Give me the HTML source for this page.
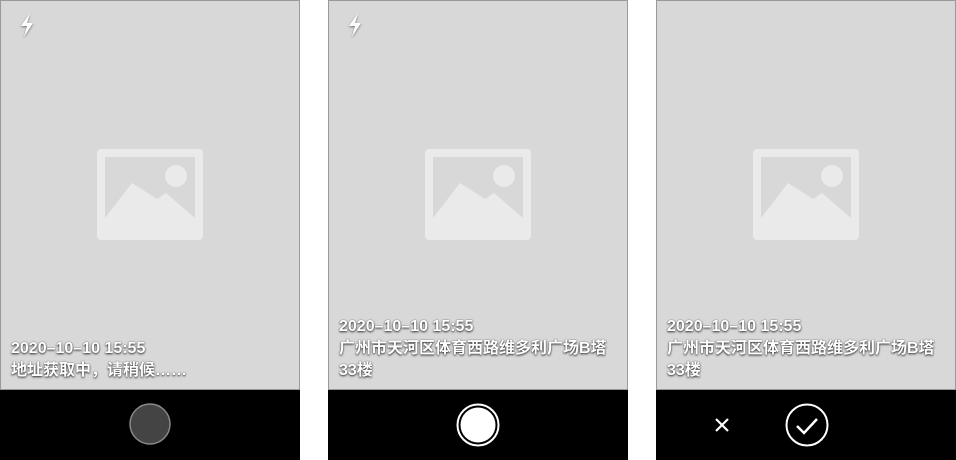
<!DOCTYPE html>
<html><head><meta charset="utf-8"><style>
*{margin:0;padding:0;box-sizing:border-box}
body{width:956px;height:460px;background:#fff;position:relative;overflow:hidden;font-family:"Liberation Sans","Noto Sans CJK SC",sans-serif}
.p{position:absolute;top:0;width:300px;height:460px;background:#000}
.v{position:absolute;left:0;top:0;width:300px;height:390px;background:#d8d8d8;border:1px solid #999}
.img{position:absolute;left:96px;top:148px}
.t{position:absolute;left:10px;color:#fff;font-size:16px;font-weight:bold;line-height:22px;white-space:nowrap;text-shadow:0 1px 2px rgba(0,0,0,.8),0 0 1px rgba(0,0,0,.6)}
.fl{position:absolute;left:17px;top:12px}
</style></head><body>
<div class="p" style="left:0">
 <div class="v">
  <svg class="fl" width="20" height="26" viewBox="0 0 20 26"><path d="M12 0 L3 13 H9 L6 24 L15 10 H9 Z" fill="#fff" filter="drop-shadow(0 1px 1px rgba(0,0,0,.5))"/></svg>
  <svg class="img" width="106" height="91" viewBox="0 0 106 91"><rect x="0" y="0" width="106" height="91" rx="4" fill="#eaeaea"/><rect x="8" y="8" width="90" height="73" fill="#d8d8d8"/><circle cx="79" cy="27" r="11" fill="#eaeaea"/><path d="M8 69 L35 34 L60 50 L69 44 L98 69 V81 H8Z" fill="#eaeaea"/></svg>
  <div class="t" style="top:337px">2020–10–10 15:55<br>地址获取中，请稍候……</div>
 </div>
 <svg style="position:absolute;left:129px;top:403px" width="44" height="44"><circle cx="21" cy="21" r="20" fill="#444" stroke="#888" stroke-width="1.5"/></svg>
</div>
<div class="p" style="left:328px">
 <div class="v">
  <svg class="fl" width="20" height="26" viewBox="0 0 20 26"><path d="M12 0 L3 13 H9 L6 24 L15 10 H9 Z" fill="#fff" filter="drop-shadow(0 1px 1px rgba(0,0,0,.5))"/></svg>
  <svg class="img" width="106" height="91" viewBox="0 0 106 91"><rect x="0" y="0" width="106" height="91" rx="4" fill="#eaeaea"/><rect x="8" y="8" width="90" height="73" fill="#d8d8d8"/><circle cx="79" cy="27" r="11" fill="#eaeaea"/><path d="M8 69 L35 34 L60 50 L69 44 L98 69 V81 H8Z" fill="#eaeaea"/></svg>
  <div class="t" style="top:315px">2020–10–10 15:55<br>广州市天河区体育西路维多利广场B塔<br>33楼</div>
 </div>
 <svg style="position:absolute;left:128px;top:403px" width="44" height="44"><circle cx="22" cy="22" r="20.5" fill="none" stroke="#fff" stroke-width="2"/><circle cx="22" cy="22" r="17.5" fill="#fff"/></svg>
</div>
<div class="p" style="left:656px">
 <div class="v">
  <svg class="img" width="106" height="91" viewBox="0 0 106 91"><rect x="0" y="0" width="106" height="91" rx="4" fill="#eaeaea"/><rect x="8" y="8" width="90" height="73" fill="#d8d8d8"/><circle cx="79" cy="27" r="11" fill="#eaeaea"/><path d="M8 69 L35 34 L60 50 L69 44 L98 69 V81 H8Z" fill="#eaeaea"/></svg>
  <div class="t" style="top:315px">2020–10–10 15:55<br>广州市天河区体育西路维多利广场B塔<br>33楼</div>
 </div>
 <svg style="position:absolute;left:58px;top:417px" width="16" height="16"><path d="M2 2 L14 14 M14 2 L2 14" stroke="#fff" stroke-width="2.2"/></svg>
 <svg style="position:absolute;left:129px;top:403px" width="44" height="44"><circle cx="22" cy="22" r="20.5" fill="none" stroke="#fff" stroke-width="2"/><path d="M12 23 L19 30 L32 16" fill="none" stroke="#fff" stroke-width="2.5"/></svg>
</div>
</body></html>
